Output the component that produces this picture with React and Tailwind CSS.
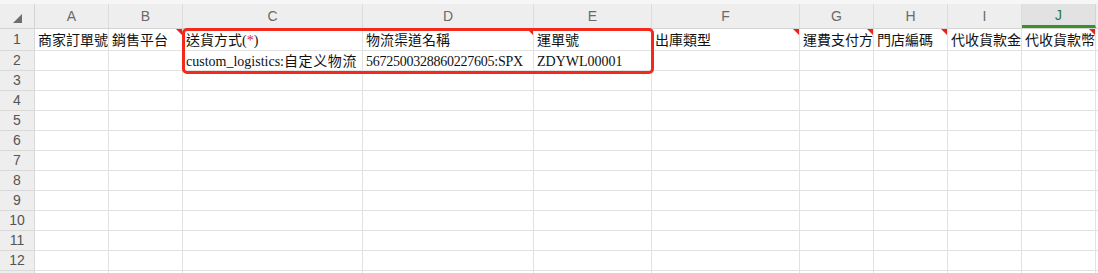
import React from "react";

const COLS = [
  { key: "A", w: 74 },
  { key: "B", w: 74 },
  { key: "C", w: 180 },
  { key: "D", w: 171 },
  { key: "E", w: 118 },
  { key: "F", w: 148 },
  { key: "G", w: 74 },
  { key: "H", w: 74 },
  { key: "I", w: 74 },
  { key: "J", w: 74 },
];

const ROW1 = {
  A: "商家訂單號",
  B: "銷售平台",
  C: (
    <>
      送貨方式(<span className="text-[#e0241b]">*</span>)
    </>
  ),
  D: "物流渠道名稱",
  E: "運單號",
  F: "出庫類型",
  G: "運費支付方式",
  H: "門店編碼",
  I: "代收貨款金額",
  J: "代收貨款幣別",
};

const ROW2 = {
  C: (
    <>
      custom_logistics:<span className="tracking-[0.6px]">自定义物流</span>
    </>
  ),
  D: <span className="tracking-[-0.25px]">5672500328860227605:SPX</span>,
  E: "ZDYWL00001",
};

// cells in row 1 carrying a comment marker
const NOTES = new Set(["B", "D", "F", "G", "H", "J"]);

const cellFont = {
  fontFamily: '"Liberation Serif", "Noto Sans CJK TC", serif',
};

function Note() {
  return (
    <span className="absolute right-0 top-0 h-0 w-0 border-l-[6px] border-t-[6px] border-l-transparent border-t-[#e8231a]" />
  );
}

function HeaderRow() {
  return (
    <div className="flex h-[29px] flex-col bg-[#eeeeee]">
      <div className="h-[4px] bg-[#f6f6f6]" />
      <div className="flex h-[25px] border-b border-[#d4d4d4] font-['Liberation_Sans',sans-serif] text-[14px] text-[#6a6a6a]">
        <div className="flex w-[35px] shrink-0 items-center justify-center border-r border-[#d4d4d4]">
          <svg width="9" height="9" viewBox="0 0 9 9" className="ml-[1px] mt-[4px]">
            <polygon points="9,0 9,9 0,9" fill="#6e6e6e" />
          </svg>
        </div>
        {COLS.map((c) =>
          c.key === "J" ? (
            <div
              key={c.key}
              style={{ width: c.w }}
              className="flex shrink-0 items-center justify-center border-b-[3px] border-r border-b-[#3b8f2d] border-r-[#d4d4d4] bg-[#e2e2e2] pt-[2px] text-[#1f7a4d]"
            >
              {c.key}
            </div>
          ) : (
            <div
              key={c.key}
              style={{ width: c.w }}
              className="flex shrink-0 items-center justify-center border-r border-[#dcdcdc]"
            >
              {c.key}
            </div>
          )
        )}
        <div className="flex-1" />
      </div>
    </div>
  );
}

function Row({ n, h, data, notes }) {
  return (
    <div className="flex" style={{ height: h }}>
      <div className="flex w-[35px] shrink-0 items-center justify-center border-b border-r border-[#d9d9d9] bg-[#eeeeee] font-['Liberation_Sans',sans-serif] text-[14px] text-[#555]">
        {n}
      </div>
      {COLS.map((c) => (
        <div
          key={c.key}
          style={{ width: c.w, ...cellFont }}
          className="relative flex shrink-0 items-center overflow-hidden whitespace-nowrap border-b border-r border-[#e2e2e2] pl-[3px] pt-[1px] text-[14px] text-[#111]"
        >
          {data && data[c.key]}
          {notes && notes.has(c.key) && <Note />}
        </div>
      ))}
      <div className="flex-1 border-b border-[#e2e2e2]" />
    </div>
  );
}

export default function App() {
  const rest = [3, 4, 5, 6, 7, 8, 9, 10, 11, 12, 13];
  return (
    <div className="relative h-[273px] w-[1098px] overflow-hidden bg-white">
      <HeaderRow />
      <Row n={1} h={22} data={ROW1} notes={NOTES} />
      <Row n={2} h={20} data={ROW2} />
      {rest.map((n) => (
        <Row key={n} n={n} h={20} />
      ))}
      {/* highlight around C1:E2 */}
      <div className="pointer-events-none absolute left-[182px] top-[28px] h-[46px] w-[472px] rounded-[5px] border-[3px] border-[#f5281c]" />
    </div>
  );
}
